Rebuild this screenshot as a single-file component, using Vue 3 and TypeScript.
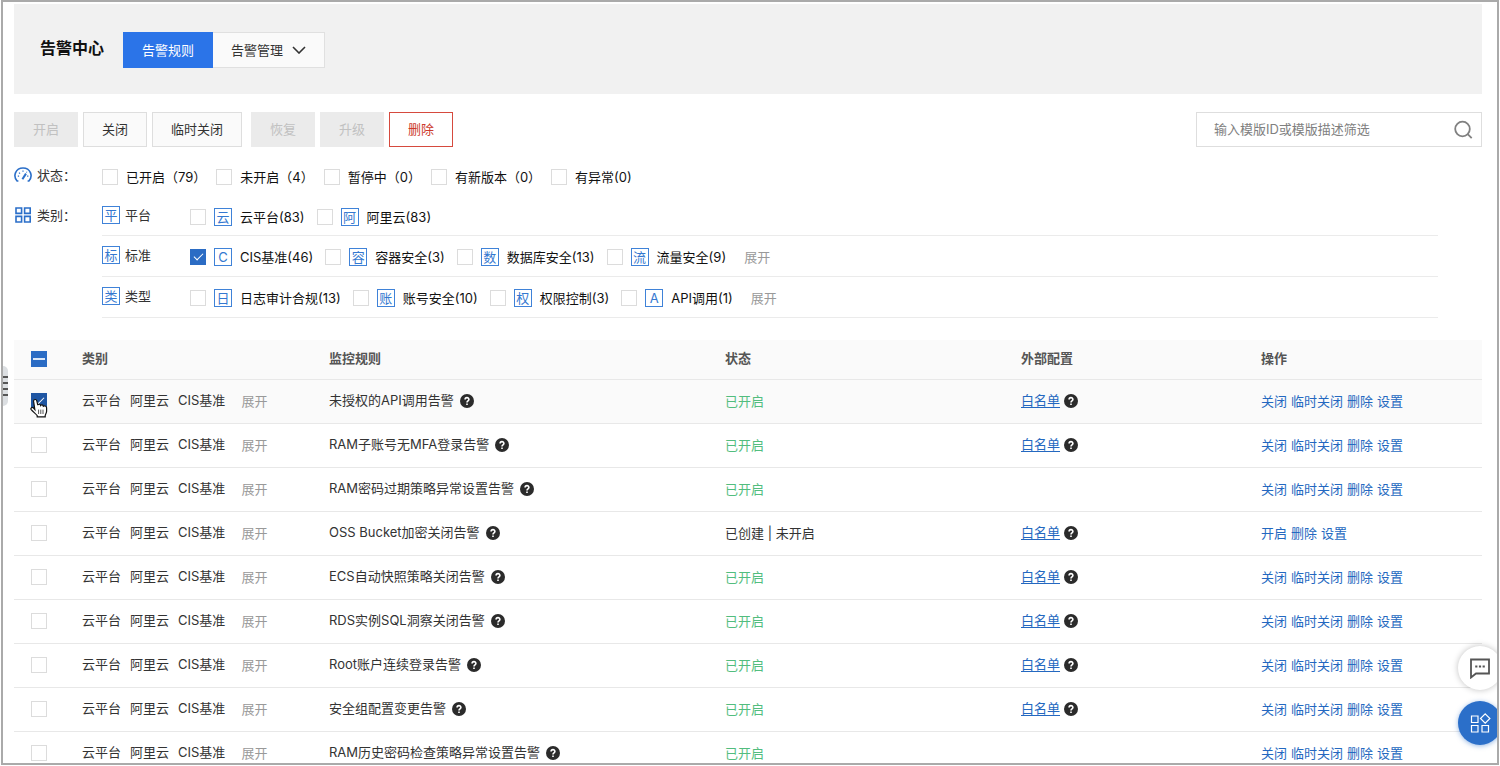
<script setup lang="ts">
import { ref } from 'vue'

interface StatusFilter { label: string; checked: boolean }
interface CategoryItem { badge: string; label: string; checked: boolean }
interface CategoryGroup { badge: string; name: string; more: boolean; items: CategoryItem[] }
interface Rule { name: string; enabled: boolean; whitelist: boolean; checked: boolean }

const keyword = ref('')

const statuses = ref<StatusFilter[]>([
  { label: '已开启（79）', checked: false },
  { label: '未开启（4）', checked: false },
  { label: '暂停中（0）', checked: false },
  { label: '有新版本（0）', checked: false },
  { label: '有异常(0)', checked: false },
])

const item = (badge: string, label: string, checked = false): CategoryItem => ({ badge, label, checked })

const groups = ref<CategoryGroup[]>([
  { badge: '平', name: '平台', more: false, items: [item('云', '云平台(83)'), item('阿', '阿里云(83)')] },
  {
    badge: '标', name: '标准', more: true,
    items: [item('C', 'CIS基准(46)', true), item('容', '容器安全(3)'), item('数', '数据库安全(13)'), item('流', '流量安全(9)')],
  },
  {
    badge: '类', name: '类型', more: true,
    items: [item('日', '日志审计合规(13)'), item('账', '账号安全(10)'), item('权', '权限控制(3)'), item('A', 'API调用(1)')],
  },
])

const rule = (name: string, whitelist = true, enabled = true, checked = false): Rule => ({ name, whitelist, enabled, checked })

const rules = ref<Rule[]>([
  rule('未授权的API调用告警', true, true, true),
  rule('RAM子账号无MFA登录告警'),
  rule('RAM密码过期策略异常设置告警', false),
  rule('OSS Bucket加密关闭告警', true, false),
  rule('ECS自动快照策略关闭告警'),
  rule('RDS实例SQL洞察关闭告警'),
  rule('Root账户连续登录告警'),
  rule('安全组配置变更告警'),
  rule('RAM历史密码检查策略异常设置告警', false),
])

const tags = ['云平台', '阿里云', 'CIS基准']
const actionsFor = (r: Rule): string[] => (r.enabled ? ['关闭', '临时关闭', '删除', '设置'] : ['开启', '删除', '设置'])
</script>

<template>
  <div class="frame">
    <main class="page">
      <header class="banner">
        <h1 class="title">告警中心</h1>
        <nav class="tabs">
          <button type="button" class="tab active">告警规则</button>
          <button type="button" class="tab">
            告警管理
            <svg class="chevron" viewBox="0 0 14 8" aria-hidden="true"><path d="M1 1l6 6 6-6" /></svg>
          </button>
        </nav>
      </header>

      <div class="toolbar">
        <div class="button-group">
          <button type="button" class="btn" disabled>开启</button>
          <button type="button" class="btn">关闭</button>
          <button type="button" class="btn">临时关闭</button>
        </div>
        <div class="button-group">
          <button type="button" class="btn" disabled>恢复</button>
          <button type="button" class="btn" disabled>升级</button>
          <button type="button" class="btn danger">删除</button>
        </div>
        <div class="search">
          <input v-model="keyword" type="text" class="search-input" placeholder="输入模版ID或模版描述筛选" aria-label="筛选模版" />
          <button type="button" class="search-btn" aria-label="搜索">
            <svg viewBox="0 0 20 20" aria-hidden="true"><circle cx="9.500" cy="9" r="7.3" /><path d="M14.7 14.2l4 4" /></svg>
          </button>
        </div>
      </div>

      <section class="filters">
        <div class="filter-name">
          <svg class="filter-icon" viewBox="0 0 18 18" aria-hidden="true">
            <path d="M4.400 15H3.100C-1.400 10 1.600 2 9 2s10.400 8 5.900 13H13.600" />
            <path d="M8.400 13.200l3.600-5.600" class="needle" />
            <path d="M8.400 5.200h1.200M5 6.600l1 1M3.800 10.200h1.300M13.100 10.200h1.300M12.400 5.800l.6.600" class="ticks" />
          </svg>
          <span>状态：</span>
        </div>
        <div class="status-list">
          <label v-for="s in statuses" :key="s.label" class="status-item">
            <input v-model="s.checked" type="checkbox" class="check" />
            <span>{{ s.label }}</span>
          </label>
        </div>

        <div class="filter-name">
          <svg class="filter-icon" viewBox="0 0 18 18" aria-hidden="true">
            <path d="M2 2h5.600v5.400H2zM10.600 2h5.600v5.400h-5.600zM2 10.400h5.600V16H2zM10.600 10.400h5.600V16h-5.600z" />
          </svg>
          <span>类别：</span>
        </div>
        <div class="groups">
          <div v-for="g in groups" :key="g.name" class="group">
            <div class="group-name"><span class="badge">{{ g.badge }}</span><span>{{ g.name }}</span></div>
            <div class="group-items">
              <label v-for="c in g.items" :key="c.label" class="cat-item">
                <input v-model="c.checked" type="checkbox" class="check" />
                <span class="badge">{{ c.badge }}</span>
                <span>{{ c.label }}</span>
              </label>
              <button v-if="g.more" type="button" class="more">展开</button>
            </div>
          </div>
        </div>
      </section>

      <table class="rules">
        <colgroup>
          <col class="col-check" /><col class="col-cat" /><col class="col-rule" /><col class="col-status" /><col class="col-ext" /><col />
        </colgroup>
        <thead>
          <tr>
            <th><input type="checkbox" class="check partial" aria-label="全选" /></th>
            <th>类别</th>
            <th>监控规则</th>
            <th>状态</th>
            <th>外部配置</th>
            <th>操作</th>
          </tr>
        </thead>
        <tbody>
          <tr v-for="(r, i) in rules" :key="r.name" :class="{ hovered: i === 0 }">
            <td>
              <div class="check-cell">
                <input v-model="r.checked" type="checkbox" class="check" :aria-label="r.name" />
                <svg v-if="i === 0" class="pointer" viewBox="0 0 18 20" aria-hidden="true">
                  <path class="hand" d="M4.800 11.400L3.600 3.400C3.400 1.200 6.300.8 6.800 2.800L7.800 7.200C8.200 5.800 10.300 6 10.600 7.400 11.200 6.400 13 6.800 13.300 8.200 14.200 7.400 16.600 8 16.600 9.800V13.200C16.600 15 15.400 16 15.200 17.600V18.800H7.200V17.600C5.800 16 3.200 13.800 1.200 11.600.2 10 2.200 8.600 3.600 10Z" />
                  <path class="creases" d="M8.600 11.600v4.400M10.800 11.600v4.400M13 11.600v4.400" />
                </svg>
              </div>
            </td>
            <td>
              <div class="cell">
                <div class="tags"><span v-for="t in tags" :key="t">{{ t }}</span></div>
                <button type="button" class="more">展开</button>
              </div>
            </td>
            <td>
              <div class="cell rule-name">
                <span class="text">{{ r.name }}</span>
                <svg class="help" viewBox="0 0 14 14" aria-hidden="true"><circle cx="7" cy="7" r="7" /><path d="M5.1 5.6C5.1 3 8.9 3 8.9 5.5 8.9 6.9 7 6.8 7 8.4M7 9.4v1.6" /></svg>
              </div>
            </td>
            <td><span :class="r.enabled ? 'on' : 'off'">{{ r.enabled ? '已开启' : '已创建 | 未开启' }}</span></td>
            <td>
              <div v-if="r.whitelist" class="cell">
                <a href="#" class="text whitelist">白名单</a>
                <svg class="help" viewBox="0 0 14 14" aria-hidden="true"><circle cx="7" cy="7" r="7" /><path d="M5.1 5.6C5.1 3 8.9 3 8.9 5.5 8.9 6.9 7 6.8 7 8.4M7 9.4v1.6" /></svg>
              </div>
            </td>
            <td>
              <div class="cell"><a v-for="a in actionsFor(r)" :key="a" href="#">{{ a }}</a></div>
            </td>
          </tr>
        </tbody>
      </table>
    </main>

    <button type="button" class="drawer-handle" aria-label="展开侧栏"><i></i><i></i><i></i><i></i></button>

    <div class="floaters">
      <button type="button" class="floater" aria-label="反馈">
        <svg viewBox="0 0 22 22" aria-hidden="true">
          <path d="M2 2.5h18v14H7L2 20.500z" />
          <path class="dots" d="M6.200 9.500h2.200M9.900 9.500h2.200M13.600 9.500h2.200" />
        </svg>
      </button>
      <button type="button" class="floater primary" aria-label="应用">
        <svg viewBox="0 0 22 22" aria-hidden="true">
          <path d="M2.500 4h6.500v6.500H2.500zM2.500 13.500h6.500V20H2.500zM13 13.500h6.500V20H13zM16.200 1.800l4.700 4.700-4.700 4.700-4.700-4.700z" />
        </svg>
      </button>
    </div>
  </div>
</template>

<style>
body {
  background: #fff;
  padding: 0 1px 1px;
}
</style>

<style scoped>
.frame {
  position: relative;
  box-sizing: border-box;
  height: calc(100vh - 1px);
  overflow: hidden;
  border: 2px solid #aaa;
  background: #fff;
  color: #333;
  font: 13px/20px Inter, "Noto Sans CJK SC", sans-serif;
}
.page {
  padding: 2px 15px 0 11px;
}
button, input {
  font: inherit;
  color: inherit;
}
button {
  cursor: pointer;
}
a {
  color: #2468c0;
  text-decoration: none;
}
.banner {
  display: flex;
  align-items: center;
  gap: 19px;
  box-sizing: border-box;
  height: 90px;
  padding: 2px 26px 0;
  background: #f1f1f1;
}
.title {
  margin: 0;
  padding-bottom: 4px;
  color: #111;
  font-size: 16px;
  line-height: 24px;
  font-weight: 700;
}
.tabs {
  display: flex;
}
.tab {
  display: flex;
  align-items: center;
  gap: 9px;
  height: 36px;
  padding: 0 18px;
  border: 1px solid #e0e0e0;
  border-left: 0;
  background: #fafafa;
}
.tab.active {
  border: 1px solid #2b74e8;
  background: #2b74e8;
  color: #fff;
}
.chevron {
  width: 14px;
  height: 8px;
  fill: none;
  stroke: #333;
  stroke-width: 1.6;
}
.toolbar {
  display: flex;
  gap: 9px;
  margin-top: 18px;
}
.button-group {
  display: flex;
  gap: 5px;
}
.btn {
  box-sizing: border-box;
  height: 35px;
  padding: 0 18px 2px;
  border: 1px solid #dedede;
  background: #fafafa;
}
.btn:disabled {
  border-color: #ebebeb;
  background: #ebebeb;
  color: #c1c1c1;
}
.btn.danger {
  border-color: #d64a3e;
  background: #fff;
  color: #cc3a2d;
}
.search {
  display: flex;
  align-items: center;
  box-sizing: border-box;
  width: 286px;
  height: 35px;
  margin-left: auto;
  padding: 0 8px 0 17px;
  border: 1px solid #dedede;
}
.search-input {
  flex: 1;
  min-width: 0;
  padding: 0 0 2px;
  border: 0;
  outline: 0;
  background: none;
}
.search-input::placeholder {
  color: #808080;
}
.search-btn {
  display: flex;
  padding: 0;
  border: 0;
  background: none;
}
.search-btn svg {
  width: 20px;
  height: 20px;
  fill: none;
  stroke: #808080;
  stroke-width: 1.8;
}
.filters {
  display: grid;
  grid-template-columns: 88px 1fr;
  margin-top: 18px;
}
.filter-name {
  display: flex;
  align-items: center;
  align-self: start;
  gap: 5px;
  height: 20px;
}
.filter-icon {
  width: 18px;
  height: 18px;
  fill: none;
  stroke: #2b6fc9;
  stroke-width: 1.6;
}
.needle {
  stroke-width: 2;
}
.ticks {
  stroke-width: 1.2;
}
.status-list {
  display: flex;
  gap: 10px;
  height: 40px;
}
.status-item, .cat-item {
  display: flex;
  align-items: center;
  gap: 8px;
  color: #111;
}
.status-item {
  height: 24px;
}
.check {
  appearance: none;
  display: grid;
  place-items: center;
  flex: none;
  box-sizing: border-box;
  width: 16px;
  height: 16px;
  margin: 0;
  border: 1px solid #dcdcdc;
  background: #fff;
}
.check:checked, .check.partial {
  border-color: #2b6cc4;
  background: #2b6cc4;
}
.check:checked::after {
  content: "";
  width: 8px;
  height: 4px;
  margin-bottom: 3px;
  border: solid #fff;
  border-width: 0 0 1px 1px;
  transform: rotate(-45deg);
}
.check.partial::after {
  content: "";
  width: 12px;
  height: 2px;
  background: #dce8f8;
}
.groups {
  margin-right: 44px;
}
.group {
  display: flex;
  box-sizing: border-box;
  height: 41px;
  border-bottom: 1px solid #ebebeb;
}
.group:first-child {
  height: 31px;
}
.group + .group {
  padding-top: 9px;
}
.group-name {
  display: flex;
  align-items: center;
  gap: 5px;
  width: 88px;
  height: 20px;
}
.badge {
  box-sizing: border-box;
  width: 18px;
  height: 18px;
  border: 1px solid #3f82d8;
  color: #3478d0;
  line-height: 16px;
  text-align: center;
}
.group-items {
  display: flex;
  gap: 12px;
  height: 24px;
}
.more {
  padding: 0;
  border: 0;
  background: none;
  color: #999;
}
.group-items .more {
  margin-left: 6px;
}
.rules {
  width: 100%;
  margin-top: 22px;
  border-collapse: collapse;
  table-layout: fixed;
}
.col-check {
  width: 52px;
}
.col-cat {
  width: 247px;
}
.col-rule {
  width: 396px;
}
.col-status {
  width: 296px;
}
.col-ext {
  width: 240px;
}
th, td {
  padding: 0 16px;
  border-bottom: 1px solid #e8e8e8;
  text-align: left;
  white-space: nowrap;
}
th:first-child, td:first-child {
  padding: 0 17px;
}
th {
  box-sizing: border-box;
  height: 39px;
  padding-bottom: 2px;
  background: #fafafa;
  color: #555;
  font-weight: 600;
}
td {
  height: 43px;
}
.hovered {
  background: #fafafa;
}
.cell {
  display: flex;
  align-items: center;
  gap: 4px;
}
.rule-name {
  gap: 6px;
}
.tags {
  display: flex;
  gap: 9px;
  margin-right: 12px;
  padding-bottom: 2px;
}
.text {
  padding-bottom: 2px;
}
.whitelist {
  text-decoration: underline;
  text-underline-offset: 2px;
}
.help {
  width: 14px;
  height: 14px;
  fill: #2b2b2b;
}
.help path {
  fill: none;
  stroke: #fff;
  stroke-width: 1.6;
}
.on {
  color: #52bd7e;
}
.off {
  color: #333;
}
.check-cell {
  position: relative;
}
.hovered .check:checked {
  border-color: #1f56a3;
  background: #1f56a3;
}
.pointer {
  position: absolute;
  top: 5px;
  left: -1px;
  width: 18px;
  height: 20px;
}
.hand {
  fill: #fff;
  stroke: #111;
  stroke-width: 1.2;
}
.creases {
  fill: none;
  stroke: #555;
}
.drawer-handle {
  position: absolute;
  top: 364px;
  left: 0;
  display: flex;
  flex-direction: column;
  justify-content: center;
  gap: 4px;
  box-sizing: border-box;
  width: 5px;
  height: 40px;
  padding: 0;
  border: 0;
  border-radius: 0 5px 5px 0;
  background: #dcdfe2;
}
.drawer-handle i {
  width: 5px;
  height: 2px;
  background: #555;
}
.floaters {
  position: absolute;
  right: -5px;
  bottom: 18px;
  display: flex;
  flex-direction: column;
  gap: 11px;
}
.floater {
  display: grid;
  place-items: center;
  width: 44px;
  height: 44px;
  padding: 0;
  border: 0;
  border-radius: 50%;
  background: #fff;
  box-shadow: 0 0 6px rgba(0, 0, 0, 0.25);
}
.floater svg {
  width: 22px;
  height: 22px;
  fill: none;
  stroke: #555;
  stroke-width: 1.8;
}
.floater .dots {
  stroke-width: 2.2;
}
.floater.primary {
  background: #2b6fc9;
  box-shadow: 0 1px 5px rgba(43, 111, 201, 0.5);
}
.floater.primary svg {
  stroke: #fff;
  stroke-width: 1.2;
}
</style>
